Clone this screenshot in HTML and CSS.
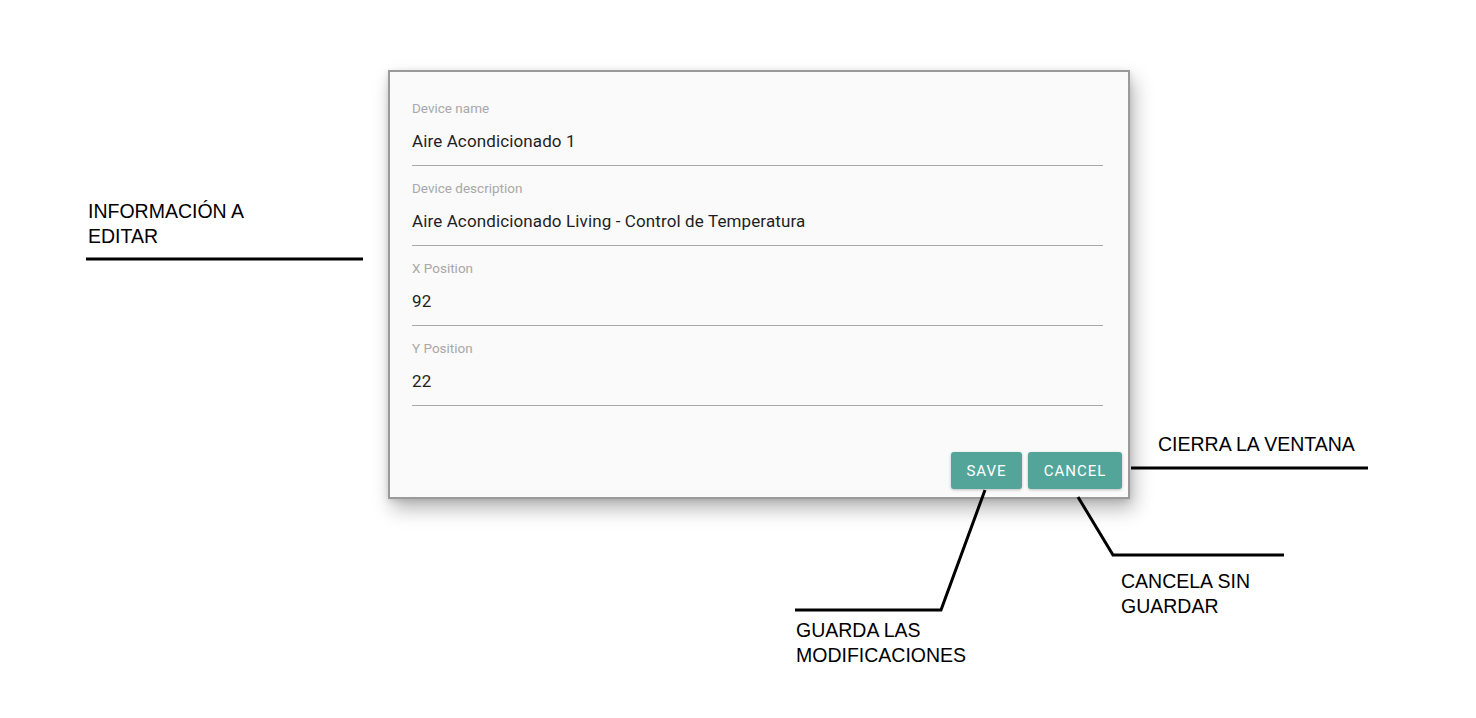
FILE: index.html
```html
<!DOCTYPE html>
<html lang="es">
<head>
<meta charset="utf-8">
<title>Edit device</title>
<link rel="stylesheet" href="styles.css">
</head>
<body>
<div class="canvas">
  <div class="dialog">
    <div class="fields">
      <div class="field">
        <div class="label">Device name</div>
        <div class="value">Aire Acondicionado 1</div>
      </div>
      <div class="field">
        <div class="label">Device description</div>
        <div class="value">Aire Acondicionado Living - Control de Temperatura</div>
      </div>
      <div class="field">
        <div class="label">X Position</div>
        <div class="value">92</div>
      </div>
      <div class="field">
        <div class="label">Y Position</div>
        <div class="value">22</div>
      </div>
    </div>
    <div class="actions">
      <button class="btn btn-save">SAVE</button>
      <button class="btn btn-cancel">CANCEL</button>
    </div>
  </div>

  <svg class="callout-lines" width="1476" height="718" viewBox="0 0 1476 718">
    <g stroke="#000" stroke-width="3" fill="none" stroke-linecap="butt" stroke-linejoin="miter">
      <line x1="86" y1="259" x2="363" y2="259"/>
      <line x1="1131" y1="468" x2="1368" y2="468"/>
      <polyline points="985,490 941,610 795,610"/>
      <polyline points="1078,497 1113,555 1284,555"/>
    </g>
  </svg>

  <div class="note note-info">INFORMACIÓN A<br>EDITAR</div>
  <div class="note note-close">CIERRA LA VENTANA</div>
  <div class="note note-cancel">CANCELA SIN<br>GUARDAR</div>
  <div class="note note-save">GUARDA LAS<br>MODIFICACIONES</div>
</div>
</body>
</html>
```

FILE: styles.css
```css
html, body {
  margin: 0;
  padding: 0;
  background: #ffffff;
}

.canvas {
  position: relative;
  width: 1476px;
  height: 718px;
  overflow: hidden;
  padding-top: 70px;
  padding-left: 388px;
  box-sizing: border-box;
}

.dialog {
  width: 742px;
  height: 429px;
  box-sizing: border-box;
  border: 2px solid #9a9a9a;
  background: #fafafa;
  box-shadow: 4px 10px 18px rgba(0, 0, 0, 0.28), 0 2px 6px rgba(0, 0, 0, 0.12);
  display: flex;
  flex-direction: column;
  font-family: Roboto, "Noto Sans", sans-serif;
}

.fields {
  padding: 28px 25px 0 22px;
}

.field {
  display: flex;
  flex-direction: column;
  border-bottom: 1px solid #a9a9a9;
  padding-bottom: 12px;
  margin-bottom: 14px;
}

.field:last-child {
  margin-bottom: 0;
}

.label {
  font-size: 13.5px;
  line-height: 16px;
  color: #a8a8a8;
}

.value {
  margin-top: 13px;
  font-size: 17px;
  letter-spacing: 0.12px;
  line-height: 24px;
  color: #1f1f1f;
}

.actions {
  margin-top: auto;
  display: flex;
  justify-content: flex-end;
  gap: 6px;
  padding: 0 6px 8px 0;
}

.btn {
  height: 37px;
  border: none;
  border-radius: 3px;
  background: #53a59a;
  color: #ffffff;
  font-family: Roboto, "Noto Sans", sans-serif;
  font-size: 15px;
  font-weight: 400;
  letter-spacing: 1px;
  box-shadow: 0 1px 3px rgba(0, 0, 0, 0.25);
  padding: 0;
}

.btn-save {
  width: 71px;
}

.btn-cancel {
  width: 94px;
}

.callout-lines {
  position: absolute;
  left: 0;
  top: 0;
  pointer-events: none;
}

.note {
  position: absolute;
  font-family: "Liberation Sans", Arial, sans-serif;
  font-size: 19.5px;
  line-height: 25px;
  color: #000;
}

.note-info {
  left: 88px;
  top: 199px;
}

.note-close {
  left: 1158px;
  top: 432px;
}

.note-cancel {
  left: 1121px;
  top: 569px;
}

.note-save {
  left: 796px;
  top: 618px;
}
```
